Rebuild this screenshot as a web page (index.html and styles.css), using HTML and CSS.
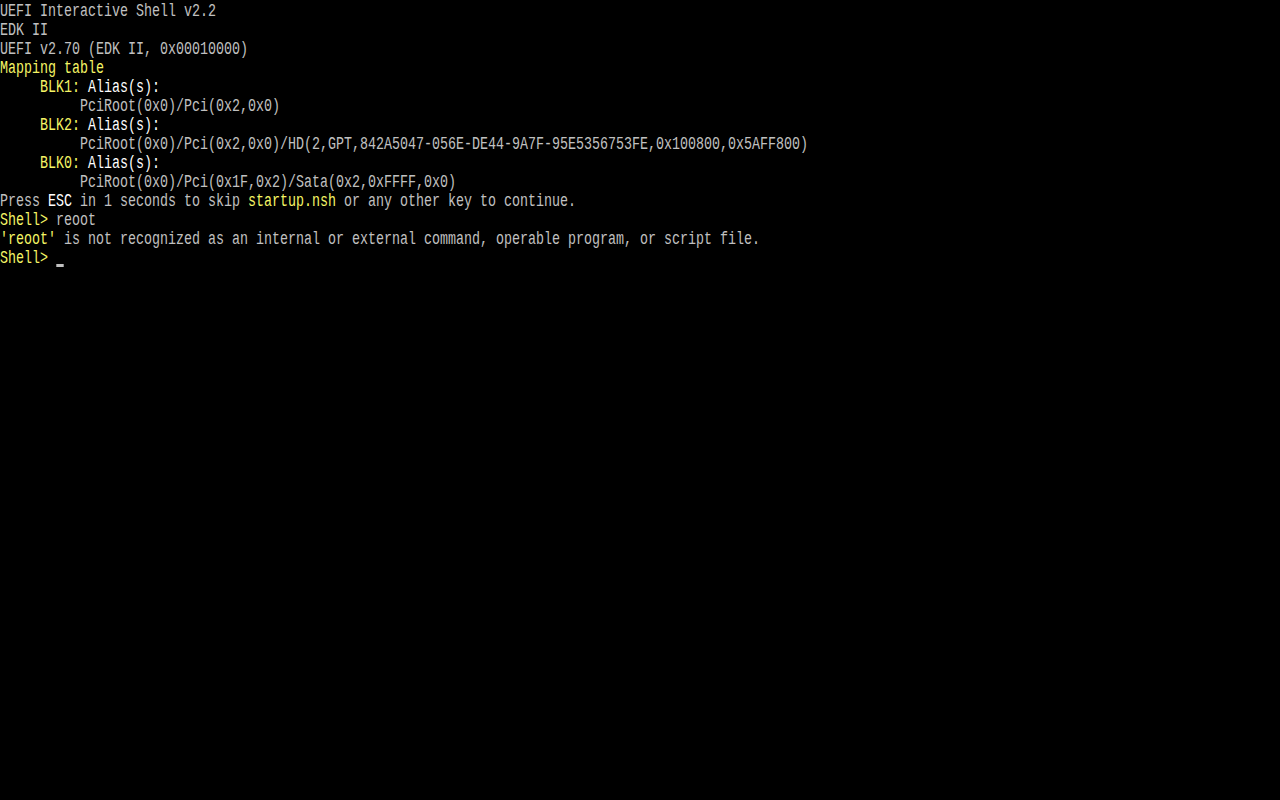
FILE: index.html
```html
<!DOCTYPE html>
<html lang="en">
<head>
<meta charset="UTF-8">
<title>UEFI Interactive Shell</title>
<link rel="stylesheet" href="styles.css">
</head>
<body>

<div class="screen">
<div class="line">UEFI Interactive Shell v2.2</div>
<div class="line">EDK II</div>
<div class="line">UEFI v2.70 (EDK II, 0x00010000)</div>
<div class="line hi">Mapping table</div>
<div class="line">     <span class="hi">BLK1:</span> <span class="em">Alias(s):</span></div>
<div class="line">          PciRoot(0x0)/Pci(0x2,0x0)</div>
<div class="line">     <span class="hi">BLK2:</span> <span class="em">Alias(s):</span></div>
<div class="line">          PciRoot(0x0)/Pci(0x2,0x0)/HD(2,GPT,842A5047-056E-DE44-9A7F-95E5356753FE,0x100800,0x5AFF800)</div>
<div class="line">     <span class="hi">BLK0:</span> <span class="em">Alias(s):</span></div>
<div class="line">          PciRoot(0x0)/Pci(0x1F,0x2)/Sata(0x2,0xFFFF,0x0)</div>
<div class="line">Press <span class="em">ESC</span> in 1 seconds to skip <span class="hi">startup.nsh</span> or any other key to continue.</div>
<div class="line"><span class="hi">Shell&gt;</span> reoot</div>
<div class="line"><span class="hi">'reoot'</span> is not recognized as an internal or external command, operable program, or script file.</div>
<div class="line"><span class="hi">Shell&gt;</span> <span class="cursor"></span></div>
</div>

</body>
</html>
```

FILE: styles.css
```css
body {
    margin: 0;
    background: #000;
}

.screen {
    width: 1280px;
    height: 800px;
    padding-top: 2px;
    box-sizing: border-box;
    overflow: hidden;
    color: #c0c0c0;
    font-family: "Liberation Mono", "DejaVu Sans Mono", monospace;
    font-size: 18px;
}

/* 8px cells, 19px rows */
.line {
    height: 19px;
    line-height: 19px;
    white-space: pre;
    transform: scaleX(0.7407);
    transform-origin: 0 0;
}

.hi { color: #f5f565; }
.em { color: #ffffff; }

/* underline cursor */
.cursor {
    display: inline-block;
    width: 10px;
    height: 3px;
    background: #c0c0c0;
    vertical-align: -4px;
}
```
